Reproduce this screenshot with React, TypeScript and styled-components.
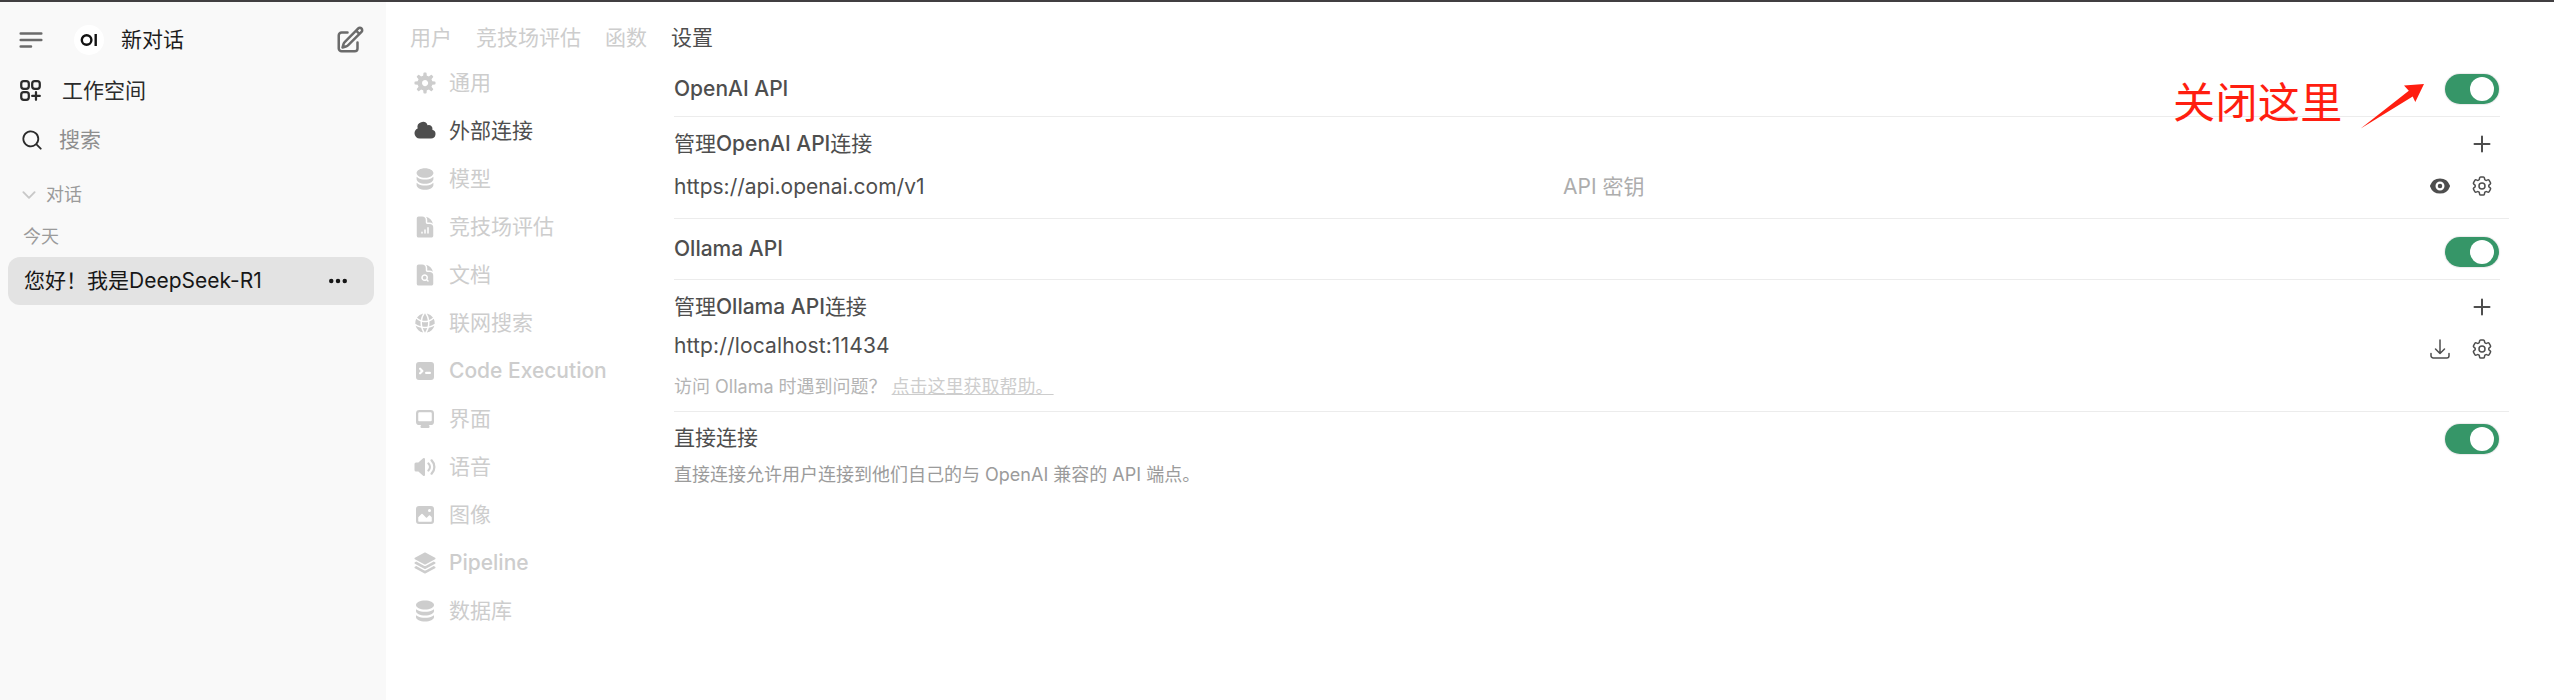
import React from "react";
import styled, { createGlobalStyle } from "styled-components";
import {
  HiDocumentChartBar,
  HiDocumentMagnifyingGlass,
  HiGlobeAlt,
  HiSquare3Stack3D,
  HiOutlineCog6Tooth,
  HiOutlineArrowDownTray,
} from "react-icons/hi2";

const GlobalStyle = createGlobalStyle`
  * { box-sizing: border-box; }
  body {
    margin: 0;
    background: #fff;
    color: #4e4e4e;
    font-family: Inter, "Noto Sans CJK SC", sans-serif;
    font-size: 21px;
    line-height: 30px;
  }
`;

const Page = styled.div`
  position: relative;
  display: flex;
  width: 2554px;
  height: 700px;
  border-top: 2px solid #413f41;
  overflow: hidden;
`;

/* Chinese runs keep the regular weight beside medium Latin text */
const Han = styled.span`
  font-weight: 400;
`;

const Mixed = ({ text }: { text: string }) => (
  <>
    {text
      .split(/([\u3000-\u9fff\uff00-\uffef]+)/)
      .filter(Boolean)
      .map((run, i) => (/[\u3000-\u9fff\uff00-\uffef]/.test(run) ? <Han key={i}>{run}</Han> : run))}
  </>
);

/* ---------- icons ---------- */

const Svg = styled.svg<{ $size: number }>`
  display: block;
  flex: none;
  width: ${(p) => p.$size}px;
  height: ${(p) => p.$size}px;
`;

type IconProps = { d: string[]; box?: number; size?: number };

const Solid = ({ d, box = 16, size = 24 }: IconProps) => (
  <Svg $size={size} viewBox={`0 0 ${box} ${box}`} fill="currentColor">
    {d.map((p) => (
      <path key={p} d={p} fillRule="evenodd" clipRule="evenodd" />
    ))}
  </Svg>
);

const Line = ({ d, size = 24, weight = 2 }: IconProps & { weight?: number }) => (
  <Svg
    $size={size}
    viewBox="0 0 24 24"
    fill="none"
    stroke="currentColor"
    strokeWidth={weight}
    strokeLinecap="round"
    strokeLinejoin="round"
  >
    {d.map((p) => (
      <path key={p} d={p} />
    ))}
  </Svg>
);

const paths = {
  menu: ["M3.75 6.75h16.5M3.75 12h16.5m-16.5 5.25H12"],
  edit: [
    "M16.862 4.487l1.687-1.688a1.875 1.875 0 112.652 2.652L10.582 16.07a4.5 4.5 0 01-1.897 1.13L6 18l.8-2.685a4.5 4.5 0 011.13-1.897l8.932-8.931zm0 0L19.5 7.125M18 14v4.75A2.25 2.25 0 0115.75 21H5.25A2.25 2.25 0 013 18.75V8.25A2.25 2.25 0 015.25 6H10",
  ],
  workspace: [
    "M13.5 16.875h3.375m0 0h3.375m-3.375 0V13.5m0 3.375v3.375M6 10.5h2.25a2.25 2.25 0 0 0 2.25-2.25V6a2.25 2.25 0 0 0-2.25-2.25H6A2.25 2.25 0 0 0 3.75 6v2.25A2.25 2.25 0 0 0 6 10.5Zm0 9.75h2.25A2.25 2.25 0 0 0 10.5 18v-2.25a2.25 2.25 0 0 0-2.25-2.25H6a2.25 2.25 0 0 0-2.25 2.25V18A2.25 2.25 0 0 0 6 20.25Zm9.75-9.75H18a2.25 2.25 0 0 0 2.25-2.25V6A2.25 2.25 0 0 0 18 3.75h-2.25A2.25 2.25 0 0 0 13.5 6v2.25a2.25 2.25 0 0 0 2.25 2.25Z",
  ],
  search: [
    "M9 3.5a5.5 5.5 0 100 11 5.5 5.5 0 000-11zM2 9a7 7 0 1112.452 4.391l3.328 3.329a.75.75 0 11-1.06 1.06l-3.329-3.328A7 7 0 012 9z",
  ],
  chevron: ["M19.5 8.25l-7.5 7.5-7.5-7.5"],
  dots: ["M2 8a1.5 1.5 0 1 1 3 0 1.5 1.5 0 0 1-3 0ZM6.5 8a1.5 1.5 0 1 1 3 0 1.5 1.5 0 0 1-3 0ZM12.5 6.5a1.5 1.5 0 1 0 0 3 1.5 1.5 0 0 0 0-3Z"],
  plus: ["M12 4.5v15m7.5-7.5h-15"],
  eye: [
    "M8 9.5a1.5 1.5 0 1 0 0-3 1.5 1.5 0 0 0 0 3Z",
    "M1.38 8.28a.87.87 0 0 1 0-.566 7.003 7.003 0 0 1 13.238.006.87.87 0 0 1 0 .566A7.003 7.003 0 0 1 1.379 8.28ZM11 8a3 3 0 1 1-6 0 3 3 0 0 1 6 0Z",
  ],
  cog: [
    "M6.955 1.45A.5.5 0 0 1 7.452 1h1.096a.5.5 0 0 1 .497.45l.17 1.699c.484.12.94.312 1.356.562l1.321-1.081a.5.5 0 0 1 .67.033l.774.775a.5.5 0 0 1 .034.67l-1.08 1.32c.25.417.44.873.561 1.357l1.699.17a.5.5 0 0 1 .45.497v1.096a.5.5 0 0 1-.45.497l-1.699.17c-.12.484-.312.94-.562 1.356l1.082 1.322a.5.5 0 0 1-.034.67l-.774.774a.5.5 0 0 1-.67.033l-1.322-1.08c-.416.25-.872.44-1.356.561l-.17 1.699a.5.5 0 0 1-.497.45H7.452a.5.5 0 0 1-.497-.45l-.17-1.699a4.973 4.973 0 0 1-1.356-.562L4.108 13.37a.5.5 0 0 1-.67-.033l-.774-.775a.5.5 0 0 1-.034-.67l1.08-1.32a4.971 4.971 0 0 1-.561-1.357l-1.699-.17A.5.5 0 0 1 1 8.548V7.452a.5.5 0 0 1 .45-.497l1.699-.17c.12-.484.312-.94.562-1.356L2.629 4.107a.5.5 0 0 1 .034-.67l.774-.774a.5.5 0 0 1 .67-.033L5.43 3.71a4.97 4.97 0 0 1 1.356-.561l.17-1.699ZM6 8c0 .538.212 1.026.558 1.385l.057.057a2 2 0 0 0 2.828-2.828l-.058-.056A2 2 0 0 0 6 8Z",
  ],
  cloud: [
    "M1 9.5A3.5 3.5 0 0 0 4.5 13H12a3 3 0 0 0 .917-5.857 2.503 2.503 0 0 0-3.198-3.019 3.5 3.5 0 0 0-6.628 2.171A3.5 3.5 0 0 0 1 9.5Z",
  ],
  stack: [
    "M10 1c3.866 0 7 1.79 7 4s-3.134 4-7 4-7-1.79-7-4 3.134-4 7-4zm5.694 8.13c.464-.264.91-.583 1.306-.952V10c0 2.21-3.134 4-7 4s-7-1.79-7-4V8.178c.396.37.842.688 1.306.953C5.838 10.006 7.854 10.5 10 10.5s4.162-.494 5.694-1.37zM3 13.179V15c0 2.21 3.134 4 7 4s7-1.79 7-4v-1.822c-.396.37-.842.688-1.306.953-1.532.875-3.548 1.369-5.694 1.369s-4.162-.494-5.694-1.37A7.009 7.009 0 013 13.179z",
  ],
  terminal: [
    "M2 4a2 2 0 0 1 2-2h8a2 2 0 0 1 2 2v8a2 2 0 0 1-2 2H4a2 2 0 0 1-2-2V4Zm2.22 1.97a.75.75 0 0 0 0 1.06l.97.97-.97.97a.75.75 0 1 0 1.06 1.06l1.5-1.5a.75.75 0 0 0 0-1.06l-1.5-1.5a.75.75 0 0 0-1.06 0ZM8.75 8.5a.75.75 0 0 0 0 1.5h2.5a.75.75 0 0 0 0-1.5h-2.5Z",
  ],
  desktop: [
    "M2 4.25A2.25 2.25 0 0 1 4.25 2h7.5A2.25 2.25 0 0 1 14 4.25v5.5A2.25 2.25 0 0 1 11.75 12h-1.312c.1.128.21.248.328.36a.75.75 0 0 1 .234.545v.345a.75.75 0 0 1-.75.75h-4.5a.75.75 0 0 1-.75-.75v-.345a.75.75 0 0 1 .234-.545c.118-.111.228-.232.328-.36H4.25A2.25 2.25 0 0 1 2 9.75v-5.5Zm2.25-.75a.75.75 0 0 0-.75.75v4.5c0 .414.336.75.75.75h7.5a.75.75 0 0 0 .75-.75v-4.5a.75.75 0 0 0-.75-.75h-7.5Z",
  ],
  speaker: [
    "M7.557 2.066A.75.75 0 0 1 8 2.75v10.5a.75.75 0 0 1-1.248.56L3.59 11H2a1 1 0 0 1-1-1V6a1 1 0 0 1 1-1h1.59l3.162-2.81a.75.75 0 0 1 .805-.124ZM12.95 3.05a.75.75 0 1 0-1.06 1.06 5.5 5.5 0 0 1 0 7.78.75.75 0 1 0 1.06 1.06 7 7 0 0 0 0-9.9Z",
    "M10.828 5.172a.75.75 0 1 0-1.06 1.06 2.5 2.5 0 0 1 0 3.536.75.75 0 1 0 1.06 1.06 4 4 0 0 0 0-5.656Z",
  ],
  photo: [
    "M2 4a2 2 0 0 1 2-2h8a2 2 0 0 1 2 2v8a2 2 0 0 1-2 2H4a2 2 0 0 1-2-2V4Zm10.5 5.707a.5.5 0 0 0-.146-.353l-1-1a.5.5 0 0 0-.708 0L9.354 9.646a.5.5 0 0 1-.708 0L6.354 7.354a.5.5 0 0 0-.708 0l-2 2a.5.5 0 0 0-.146.353V12a.5.5 0 0 0 .5.5h8a.5.5 0 0 0 .5-.5V9.707ZM12 5a1 1 0 1 1-2 0 1 1 0 0 1 2 0Z",
  ],
  database: [
    "M8 7c3.314 0 6-1.343 6-3s-2.686-3-6-3-6 1.343-6 3 2.686 3 6 3Z",
    "M8 8.5c1.84 0 3.579-.37 4.914-1.037A6.33 6.33 0 0 0 14 6.78V8c0 1.657-2.686 3-6 3S2 9.657 2 8V6.78c.346.273.72.5 1.087.683C4.42 8.131 6.16 8.5 8 8.5Z",
    "M8 12.5c1.84 0 3.579-.37 4.914-1.037.366-.183.74-.41 1.086-.684V12c0 1.657-2.686 3-6 3s-6-1.343-6-3v-1.22c.346.273.72.5 1.087.683C4.42 12.131 6.16 12.5 8 12.5Z",
  ],
};

/* ---------- sidebar ---------- */

const Sidebar = styled.aside`
  flex: none;
  width: 386px;
  background: #f9f9f9;
  color: #2b2b2b;
`;

const SideRow = styled.div<{ $height: number; $left: number; $gap: number }>`
  display: flex;
  align-items: center;
  height: ${(p) => p.$height}px;
  padding-left: ${(p) => p.$left}px;
  gap: ${(p) => p.$gap}px;
`;

const TopRow = styled(SideRow)`
  padding-right: 21px;
  margin-top: 12px;
`;

const Tint = styled.span<{ $color: string }>`
  display: flex;
  color: ${(p) => p.$color};
`;

const Logo = styled.span`
  display: flex;
  align-items: center;
  justify-content: center;
  width: 30px;
  height: 30px;
  margin-left: 13px;
  border-radius: 50%;
  background: #fff;
`;

const NewChat = styled.span`
  flex: 1;
  padding-left: 2px;
  color: #1c1c1c;
`;

const SideLabel = styled.div<{ $height: number; $left: number }>`
  display: flex;
  align-items: center;
  gap: 8px;
  height: ${(p) => p.$height}px;
  padding-left: ${(p) => p.$left}px;
  font-size: 18px;
  color: #9b9b9b;
`;

const ChatItem = styled.div`
  display: flex;
  align-items: center;
  justify-content: space-between;
  width: 366px;
  height: 48px;
  margin: 10px 0 0 8px;
  padding: 0 24px 0 16px;
  border-radius: 12px;
  background: #e3e3e3;
  color: #171717;
`;

/* ---------- main area ---------- */

const Main = styled.main`
  flex: 1;
  display: flex;
  flex-direction: column;
`;

const Tabs = styled.nav`
  display: flex;
  align-items: center;
  gap: 24px;
  height: 52px;
  padding: 20px 0 0 24px;
`;

const Tab = styled.span<{ $active?: boolean }>`
  color: ${(p) => (p.$active ? "#4e4e4e" : "#cdcdcd")};
`;

const Body = styled.div`
  display: flex;
  flex: 1;
`;

const Menu = styled.nav`
  flex: none;
  width: 288px;
  padding: 5px 0 0 27px;
`;

const MenuItem = styled.div<{ $active?: boolean }>`
  display: flex;
  align-items: center;
  gap: 12px;
  height: 48px;
  font-weight: 500;
  color: ${(p) => (p.$active ? "#4e4e4e" : "#cdcdcd")};
`;

const Content = styled.section`
  width: 1835px;
  padding-top: 7px;
`;

const Row = styled.div<{ $height: number }>`
  display: flex;
  align-items: center;
  justify-content: space-between;
  width: 1826px;
  height: ${(p) => p.$height}px;
  font-weight: 500;
`;

const Divider = styled.hr<{ $inset?: boolean; $top?: number }>`
  width: ${(p) => (p.$inset ? 1826 : 1835)}px;
  height: 1px;
  margin: ${(p) => p.$top ?? 0}px 0 0;
  border: 0;
  background: #ececec;
`;

const UrlRow = styled.div<{ $height: number; $spacing?: number }>`
  display: grid;
  grid-template-columns: 889px 1fr auto;
  grid-template-rows: 100%;
  align-items: center;
  width: 1826px;
  height: ${(p) => p.$height}px;
  letter-spacing: ${(p) => p.$spacing ?? 0}px;
`;

const Placeholder = styled.span`
  color: #adadad;
`;

const Actions = styled.div<{ $drop?: number }>`
  display: flex;
  gap: 18px;
  padding-right: 6px;
  margin-top: ${(p) => p.$drop ?? 0}px;
`;

const Switch = styled.span<{ $drop?: number }>`
  display: flex;
  align-items: center;
  justify-content: flex-end;
  width: 54px;
  height: 30px;
  margin: ${(p) => p.$drop ?? 0}px 1px 0 0;
  padding-right: 5px;
  border-radius: 15px;
  background: #369668;
  box-shadow: 0 0 1px 1px #eceaec;

  &::after {
    content: "";
    width: 24px;
    height: 24px;
    border-radius: 50%;
    background: #fff;
  }
`;

const Hint = styled.p<{ $color: string; $height: number; $top?: number }>`
  margin: ${(p) => p.$top ?? 0}px 0 0;
  font-size: 18px;
  line-height: ${(p) => p.$height}px;
  color: ${(p) => p.$color};
`;

const HelpLink = styled.a`
  margin-left: 5px;
  color: #cdcdcd;
  text-decoration: underline;
`;

/* ---------- hand-drawn note over the page ---------- */

const Note = styled.div`
  position: absolute;
  left: 2173px;
  top: 71px;
  display: flex;
  color: #ff1e10;
  font-size: 42px;
  line-height: 60px;
  letter-spacing: 0.4px;
`;

const Arrow = styled.svg`
  position: absolute;
  left: 2358px;
  top: 78px;
  width: 68px;
  height: 50px;
`;

const menuItems = [
  { label: "通用", icon: <Solid d={paths.cog} /> },
  { label: "外部连接", icon: <Solid d={paths.cloud} />, active: true },
  { label: "模型", icon: <Solid d={paths.stack} box={20} /> },
  { label: "竞技场评估", icon: <HiDocumentChartBar size={24} /> },
  { label: "文档", icon: <HiDocumentMagnifyingGlass size={24} /> },
  { label: "联网搜索", icon: <HiGlobeAlt size={24} /> },
  { label: "Code Execution", icon: <Solid d={paths.terminal} /> },
  { label: "界面", icon: <Solid d={paths.desktop} /> },
  { label: "语音", icon: <Solid d={paths.speaker} /> },
  { label: "图像", icon: <Solid d={paths.photo} /> },
  { label: "Pipeline", icon: <HiSquare3Stack3D size={24} /> },
  { label: "数据库", icon: <Solid d={paths.database} /> },
];

export default function App() {
  return (
    <>
      <GlobalStyle />
      <Page>
        <Sidebar>
          <TopRow $height={52} $left={16} $gap={15}>
            <Tint $color="#6b6b6b">
              <Line d={paths.menu} size={30} />
            </Tint>
            <Logo>
              <svg width="18" height="14" viewBox="0 0 18 14" fill="none" stroke="#111" strokeWidth="2.4">
                <circle cx="6.6" cy="7" r="4.8" />
                <path d="M15.7 1v12" />
              </svg>
            </Logo>
            <NewChat>
              <Mixed text="新对话" />
            </NewChat>
            <Tint $color="#6b6b6b">
              <Line d={paths.edit} size={30} />
            </Tint>
          </TopRow>
          <SideRow $height={49} $left={17} $gap={18}>
            <Line d={paths.workspace} size={27} />
            <Mixed text="工作空间" />
          </SideRow>
          <SideRow $height={49} $left={20} $gap={15}>
            <Solid d={paths.search} box={20} size={24} />
            <Tint $color="#8e8e8e">
              <Mixed text="搜索" />
            </Tint>
          </SideRow>
          <SideLabel $height={62} $left={20}>
            <Tint $color="#c8c8c8">
              <Line d={paths.chevron} size={18} weight={2.5} />
            </Tint>
            <Mixed text="对话" />
          </SideLabel>
          <SideLabel $height={21} $left={23}>
            <Mixed text="今天" />
          </SideLabel>
          <ChatItem>
            <span>
              <Mixed text="您好！我是DeepSeek-R1" />
            </span>
            <Solid d={paths.dots} size={24} />
          </ChatItem>
        </Sidebar>
        <Main>
          <Tabs>
            <Tab><Mixed text="用户" /></Tab>
            <Tab><Mixed text="竞技场评估" /></Tab>
            <Tab><Mixed text="函数" /></Tab>
            <Tab $active><Mixed text="设置" /></Tab>
          </Tabs>
          <Body>
            <Menu>
              {menuItems.map((item) => (
                <MenuItem key={item.label} $active={item.active}>
                  {item.icon}
                  <span>
                    <Mixed text={item.label} />
                  </span>
                </MenuItem>
              ))}
            </Menu>
            <Content>
              <Row $height={55}>
                <span>OpenAI API</span>
                <Switch />
              </Row>
              <Divider $inset />
              <Row $height={54}>
                <span>
                  <Mixed text="管理OpenAI API连接" />
                </span>
                <Actions>
                  <Line d={paths.plus} />
                </Actions>
              </Row>
              <UrlRow $height={32}>
                <span>https://api.openai.com/v1</span>
                <Placeholder>
                  <Mixed text="API 密钥" />
                </Placeholder>
                <Actions $drop={-2}>
                  <Solid d={paths.eye} />
                  <HiOutlineCog6Tooth size={24} />
                </Actions>
              </UrlRow>
              <Divider $top={15} />
              <Row $height={60}>
                <span>Ollama API</span>
                <Switch $drop={6} />
              </Row>
              <Divider $inset />
              <Row $height={54}>
                <span>
                  <Mixed text="管理Ollama API连接" />
                </span>
                <Actions>
                  <Line d={paths.plus} />
                </Actions>
              </Row>
              <UrlRow $height={24} $spacing={0.14}>
                <span>http://localhost:11434</span>
                <span />
                <Actions $drop={6}>
                  <HiOutlineArrowDownTray size={24} />
                  <HiOutlineCog6Tooth size={24} />
                </Actions>
              </UrlRow>
              <Hint $color="#b4b4b4" $height={24} $top={17}>
                <Mixed text="访问 Ollama 时遇到问题？" />
                <HelpLink>
                  <Mixed text="点击这里获取帮助。" />
                </HelpLink>
              </Hint>
              <Divider $top={12} />
              <Row $height={52}>
                <span>
                  <Mixed text="直接连接" />
                </span>
                <Switch $drop={2} />
              </Row>
              <Hint $color="#9b9b9b" $height={22}>
                <Mixed text="直接连接允许用户连接到他们自己的与 OpenAI 兼容的 API 端点。" />
              </Hint>
            </Content>
          </Body>
        </Main>
        <Note>关闭这里</Note>
        <Arrow viewBox="0 0 68 50" fill="#ff1e10">
          <path d="M2.7 48.5 L50.8 10.8 L46 5.6 L66 4 L57.3 22 L54.7 16.6 Z" />
        </Arrow>
      </Page>
    </>
  );
}
